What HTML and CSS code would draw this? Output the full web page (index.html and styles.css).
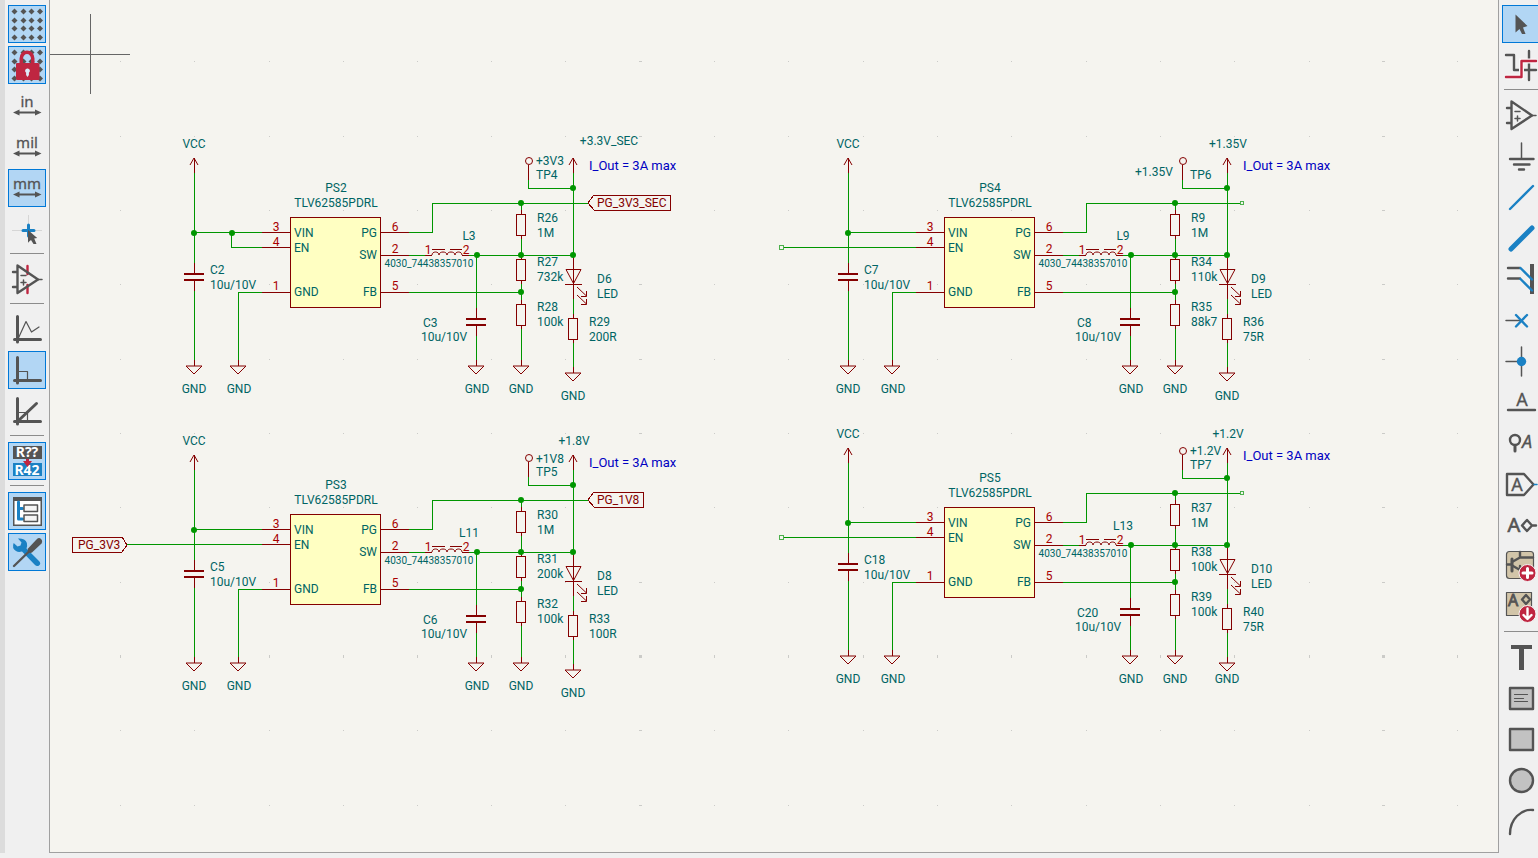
FILE: index.html
```html
<!doctype html>
<html lang="en">
<head>
    <meta charset="UTF-8">
    <title>Schematic Editor</title>
    <link rel="stylesheet" href="styles.css">
</head>
<body>
<div class="workspace">
    <nav class="toolbar toolbar-left" aria-label="Options">
        <button class="active" title="Show grid"><svg viewBox="0 0 38 38"><use href="#i-grid"/></svg></button>
        <button class="active" title="Grid overrides"><svg viewBox="0 0 38 38"><use href="#i-grid"/><path class="red" d="M8 18q0-1 1-1h2.500V12.500a7.500 8 0 0 1 15 0V17H30q1.500 0 1.500 1.500V32.500q0 1.500-1.500 1.500H9.500Q8 34 8 32.500zM15 17h8v-4a4 5 0 0 0-8 0z"/><path class="pale" d="M19.500 22.500a2.300 2.300 0 0 1 1.400 4.200V29l-1.400 2-1.400-2v-2.300a2.300 2.300 0 0 1 1.400-4.200z"/></svg></button>
        <button title="Inches"><svg viewBox="0 0 38 38"><text class="unit" x="19" y="20">in</text><use href="#i-arrows"/></svg></button>
        <button title="Mils"><svg viewBox="0 0 38 38"><text class="unit" x="19" y="20">mil</text><use href="#i-arrows"/></svg></button>
        <button class="active" title="Millimeters"><svg viewBox="0 0 38 38"><text class="unit" x="19" y="20">mm</text><use href="#i-arrows"/></svg></button>
        <button title="Full-window crosshairs"><svg viewBox="0 0 38 38"><path class="faint" d="M4 20.500h30M20.500 5v28"/><path class="line blue-line w3" d="M15 20.500h11M20.500 15v11"/><path class="dark" d="M20 20v12.500l3-2.500 2.500 4h3l-2.300-5.500 3-.5z"/></svg></button>
        <hr>
        <button title="Show hidden pins"><svg viewBox="0 0 38 38"><path class="line red-line w2" d="M19.500 6v8M19.500 25v8"/><use href="#i-amp"/></svg></button>
        <hr>
        <button title="Free angle"><svg viewBox="0 0 38 38"><use href="#i-axes"/><path class="line w1" d="M10 29l8-17.500 5.500 10.500 7.500-5"/></svg></button>
        <button class="active" title="90 degree"><svg viewBox="0 0 38 38"><path class="line w1" d="M10 20.500h9.500V29"/><use href="#i-axes"/></svg></button>
        <button title="45 degree"><svg viewBox="0 0 38 38"><path class="line w1" d="M10 20.500h9.500V29"/><path class="line w3" d="M10 29L28.500 11.500"/><use href="#i-axes"/></svg></button>
        <hr>
        <button class="active" title="Annotate automatically"><svg viewBox="0 0 38 38"><path class="dark" d="M5 4h29v13H5z"/><path class="blue" d="M5 21h29v13H5z"/><text class="anno" x="19" y="15">R??</text><text class="anno" x="19" y="33">R42</text><path class="red" d="M18 17h3v2h3l-4.500 6-4.500-6h3z"/></svg></button>
        <hr>
        <button class="active" title="Hierarchy navigator"><svg viewBox="0 0 38 38"><path class="white" d="M6 6h27v27H6z"/><path class="dark" d="M5 5h29v29H5zM6.500 9v23.500h26V9z" fill-rule="evenodd"/><path class="line blue-line w3" d="M10.500 10v17h4M10.500 16.500h4"/><path class="line white w1-5" d="M16 13h13.500v6.500H16zM16 23h13.500v6.500H16z"/></svg></button>
        <button class="active" title="Properties manager"><svg viewBox="0 0 38 38"><path class="blue" d="M10 5.500l3.500 4-1 3-3 1-3.800-3.500Q3.500 15 8 18q2.500 1.700 6 .5L26.500 31.500q2.500 2.500 4.500 1 2.500-2 0-4.500L18.500 15.500Q20.500 9 16 6.500 13 5 10 5.500z"/><path class="line w2" d="M6 33L22 17.500"/><path class="dark" d="M20 15.500L28.500 6.500q2.500-2.500 4.500-.5t.5 4.500L24 19.500q-2 1-3.500-.5t-.5-3.500z"/></svg></button>
    </nav>

    <main class="canvas">
        <svg class="sheet" role="img" aria-label="Step-down regulators">
            <defs>
                <path id="dots" d="M120 0h1M194 0h1M269 0h1M343 0h1M417 0h1M491 0h1M565 0h1M639 0h3M714 0h1M788 0h1M863 0h1M937 0h1M1011 0h1M1086 0h1M1160 0h1M1234 0h1M1309 0h1M1382 0h3M1457 0h1"/>
                <g id="gnd"><path class="part" d="M0 0v6"/><path class="part thin" d="M-8 6H8L0 14z"/></g>
                <g id="power"><path class="part" d="M0 0v15"/><path class="part thin" d="M-4 7L0 0l4 7"/></g>
                <path id="res" class="part" d="M0-4v4M-5 0h9v21h-9zM0 21v4"/>
                <g id="cap"><path class="part" d="M0-10V0M0 8v10"/><path class="plate" d="M-10 1h20M-10 7h20"/></g>
                <circle id="dot" r="3"/>
                <g id="regulator">
                    <g class="wire">
                        <path d="M194 173v90M194 291v69M194 232h68M262 292h-24v68"/>
                        <path d="M409 232h23v-29h89M409 255h16M469 255h104M409 292h112"/>
                        <path d="M476 255v53M476 336v24M521 203v7M521 239v16M521 284v16M521 329v31"/>
                        <path d="M528 180v8h45M573 173v85M573 299v15M573 343v24"/>
                    </g>
                    <use href="#power" x="194" y="158"/>
                    <use href="#power" x="573" y="158"/>
                    <use href="#cap" x="194" y="273"/>
                    <use href="#cap" x="476" y="318"/>
                    <use href="#gnd" x="194" y="360"/>
                    <use href="#gnd" x="238" y="360"/>
                    <use href="#gnd" x="476" y="360"/>
                    <use href="#gnd" x="521" y="360"/>
                    <use href="#gnd" x="573" y="367"/>
                    <use href="#res" x="521" y="214"/>
                    <use href="#res" x="521" y="259"/>
                    <use href="#res" x="521" y="304"/>
                    <use href="#res" x="573" y="318"/>
                    <path class="part" d="M262 232h28M262 247h28M262 292h28M381 232h28M381 255h28M381 292h28"/>
                    <path class="part chip" d="M290 217h90v90h-90z"/>
                    <path class="part" d="M425 255h7M462 255h7M432 249h13M450 249h12"/>
                    <path class="part thin" d="M432 255c0-4 7-4 7 0 0-4 8-4 8 0 0-4 8-4 8 0 0-4 7-4 7 0"/>
                    <path class="part" d="M528 165v15M573 258v41M565 284h17"/>
                    <circle class="part thin" cx="529" cy="161" r="3.500"/>
                    <path class="part thin" d="M566 269.500h15l-7.500 14zM577 287l9.500 9M586.500 291v5.500H581M577 295l9.500 9M586.500 299v5.500H581"/>
                    <g class="joint">
                        <use href="#dot" x="194" y="233"/>
                        <use href="#dot" x="477" y="255"/>
                        <use href="#dot" x="521" y="203"/>
                        <use href="#dot" x="521" y="255"/>
                        <use href="#dot" x="521" y="292"/>
                        <use href="#dot" x="573" y="188"/>
                        <use href="#dot" x="573" y="255"/>
                    </g>
                </g>
            </defs>

            <!-- page coordinates start at the left toolbar -->
            <g transform="translate(-50 0)">
                <g class="grid">
                    <use href="#dots" y="61"/><use href="#dots" y="136"/><use href="#dots" y="210"/>
                    <use href="#dots" y="284"/><use href="#dots" y="359"/><use href="#dots" y="433"/>
                    <use href="#dots" y="507"/><use href="#dots" y="582"/><use class="major" href="#dots" y="656"/>
                    <use href="#dots" y="730"/><use href="#dots" y="805"/>
                </g>
                <path class="cursor" d="M50 54h80M90 14v80"/>

                <!-- 3.3V -->
                <g>
                    <use href="#regulator"/>
                    <path class="wire" d="M231 232v15h31M521 203h67"/>
                    <use class="joint" href="#dot" x="232" y="233"/>
                    <path class="part" d="M588 203l6-8h76v15h-76z"/>
                    <g class="mid">
                        <text x="194" y="148">VCC</text><text x="194" y="393">GND</text><text x="239" y="393">GND</text>
                        <text x="477" y="393">GND</text><text x="521" y="393">GND</text><text x="573" y="400">GND</text>
                        <text x="336" y="192">PS2</text><text x="336" y="207">TLV62585PDRL</text>
                        <text x="469" y="240">L3</text><text class="small" x="429" y="267">4030_74438357010</text>
                        <text x="609" y="145">+3.3V_SEC</text>
                    </g>
                    <g class="mid num">
                        <text x="276" y="231">3</text><text x="276" y="246">4</text><text x="276" y="290">1</text>
                        <text x="395" y="231">6</text><text x="395" y="253">2</text><text x="395" y="290">5</text>
                        <text x="428" y="254">1</text><text x="466" y="254">2</text>
                    </g>
                    <text x="294" y="237">VIN</text><text x="294" y="252">EN</text><text x="294" y="296">GND</text>
                    <g class="end"><text x="377" y="237">PG</text><text x="377" y="259">SW</text><text x="377" y="296">FB</text></g>
                    <text x="210" y="274">C2</text><text x="210" y="289">10u/10V</text>
                    <text x="423" y="327">C3</text><text x="421" y="341">10u/10V</text>
                    <text x="537" y="222">R26</text><text x="537" y="237">1M</text>
                    <text x="537" y="266">R27</text><text x="537" y="281">732k</text>
                    <text x="537" y="311">R28</text><text x="537" y="326">100k</text>
                    <text x="597" y="283">D6</text><text x="597" y="298">LED</text>
                    <text x="589" y="326">R29</text><text x="589" y="341">200R</text>
                    <text x="536" y="165">+3V3</text><text x="536" y="179">TP4</text>
                    <text class="label" x="597" y="207">PG_3V3_SEC</text>
                    <text class="note" x="589" y="170">I_Out = 3A max</text>
                </g>

                <!-- 1.35V -->
                <g transform="translate(654 0)">
                    <use href="#regulator"/>
                    <path class="wire" d="M129 247h133M521 203h65"/>
                    <path class="open" d="M125 245h4v4h-4zM586 201h3v3h-3z"/>
                    <g class="mid">
                        <text x="194" y="148">VCC</text><text x="194" y="393">GND</text><text x="239" y="393">GND</text>
                        <text x="477" y="393">GND</text><text x="521" y="393">GND</text><text x="573" y="400">GND</text>
                        <text x="336" y="192">PS4</text><text x="336" y="207">TLV62585PDRL</text>
                        <text x="469" y="240">L9</text><text class="small" x="429" y="267">4030_74438357010</text>
                        <text x="574" y="148">+1.35V</text>
                    </g>
                    <g class="mid num">
                        <text x="276" y="231">3</text><text x="276" y="246">4</text><text x="276" y="290">1</text>
                        <text x="395" y="231">6</text><text x="395" y="253">2</text><text x="395" y="290">5</text>
                        <text x="428" y="254">1</text><text x="466" y="254">2</text>
                    </g>
                    <text x="294" y="237">VIN</text><text x="294" y="252">EN</text><text x="294" y="296">GND</text>
                    <g class="end"><text x="377" y="237">PG</text><text x="377" y="259">SW</text><text x="377" y="296">FB</text></g>
                    <text x="210" y="274">C7</text><text x="210" y="289">10u/10V</text>
                    <text x="423" y="327">C8</text><text x="421" y="341">10u/10V</text>
                    <text x="537" y="222">R9</text><text x="537" y="237">1M</text>
                    <text x="537" y="266">R34</text><text x="537" y="281">110k</text>
                    <text x="537" y="311">R35</text><text x="537" y="326">88k7</text>
                    <text x="597" y="283">D9</text><text x="597" y="298">LED</text>
                    <text x="589" y="326">R36</text><text x="589" y="341">75R</text>
                    <text x="481" y="176">+1.35V</text><text x="536" y="179">TP6</text>
                    <text class="note" x="589" y="170">I_Out = 3A max</text>
                </g>

                <!-- 1.8V -->
                <g transform="translate(0 297)">
                    <use href="#regulator"/>
                    <path class="wire" d="M127 247h135M521 203h67"/>
                    <path class="part" d="M588 203l6-8h49v15h-49zM72 240h50l5 8-5 7H72z"/>
                    <g class="mid">
                        <text x="194" y="148">VCC</text><text x="194" y="393">GND</text><text x="239" y="393">GND</text>
                        <text x="477" y="393">GND</text><text x="521" y="393">GND</text><text x="573" y="400">GND</text>
                        <text x="336" y="192">PS3</text><text x="336" y="207">TLV62585PDRL</text>
                        <text x="469" y="240">L11</text><text class="small" x="429" y="267">4030_74438357010</text>
                        <text x="574" y="148">+1.8V</text>
                    </g>
                    <g class="mid num">
                        <text x="276" y="231">3</text><text x="276" y="246">4</text><text x="276" y="290">1</text>
                        <text x="395" y="231">6</text><text x="395" y="253">2</text><text x="395" y="290">5</text>
                        <text x="428" y="254">1</text><text x="466" y="254">2</text>
                    </g>
                    <text x="294" y="237">VIN</text><text x="294" y="252">EN</text><text x="294" y="296">GND</text>
                    <g class="end"><text x="377" y="237">PG</text><text x="377" y="259">SW</text><text x="377" y="296">FB</text></g>
                    <text x="210" y="274">C5</text><text x="210" y="289">10u/10V</text>
                    <text x="423" y="327">C6</text><text x="421" y="341">10u/10V</text>
                    <text x="537" y="222">R30</text><text x="537" y="237">1M</text>
                    <text x="537" y="266">R31</text><text x="537" y="281">200k</text>
                    <text x="537" y="311">R32</text><text x="537" y="326">100k</text>
                    <text x="597" y="283">D8</text><text x="597" y="298">LED</text>
                    <text x="589" y="326">R33</text><text x="589" y="341">100R</text>
                    <text x="536" y="166">+1V8</text><text x="536" y="179">TP5</text>
                    <text class="label" x="597" y="207">PG_1V8</text>
                    <text class="label" x="78" y="252">PG_3V3</text>
                    <text class="note" x="589" y="170">I_Out = 3A max</text>
                </g>

                <!-- 1.2V -->
                <g transform="translate(654 290)">
                    <use href="#regulator"/>
                    <path class="wire" d="M129 247h133M521 203h65"/>
                    <path class="open" d="M125 245h4v4h-4zM586 201h3v3h-3z"/>
                    <g class="mid">
                        <text x="194" y="148">VCC</text><text x="194" y="393">GND</text><text x="239" y="393">GND</text>
                        <text x="477" y="393">GND</text><text x="521" y="393">GND</text><text x="573" y="393">GND</text>
                        <text x="336" y="192">PS5</text><text x="336" y="207">TLV62585PDRL</text>
                        <text x="469" y="240">L13</text><text class="small" x="429" y="267">4030_74438357010</text>
                        <text x="574" y="148">+1.2V</text>
                    </g>
                    <g class="mid num">
                        <text x="276" y="231">3</text><text x="276" y="246">4</text><text x="276" y="290">1</text>
                        <text x="395" y="231">6</text><text x="395" y="253">2</text><text x="395" y="290">5</text>
                        <text x="428" y="254">1</text><text x="466" y="254">2</text>
                    </g>
                    <text x="294" y="237">VIN</text><text x="294" y="252">EN</text><text x="294" y="296">GND</text>
                    <g class="end"><text x="377" y="237">PG</text><text x="377" y="259">SW</text><text x="377" y="296">FB</text></g>
                    <text x="210" y="274">C18</text><text x="210" y="289">10u/10V</text>
                    <text x="423" y="327">C20</text><text x="421" y="341">10u/10V</text>
                    <text x="537" y="222">R37</text><text x="537" y="237">1M</text>
                    <text x="537" y="266">R38</text><text x="537" y="281">100k</text>
                    <text x="537" y="311">R39</text><text x="537" y="326">100k</text>
                    <text x="597" y="283">D10</text><text x="597" y="298">LED</text>
                    <text x="589" y="326">R40</text><text x="589" y="341">75R</text>
                    <text x="536" y="165">+1.2V</text><text x="536" y="179">TP7</text>
                    <text class="note" x="589" y="170">I_Out = 3A max</text>
                </g>
            </g>
        </svg>
    </main>

    <nav class="toolbar toolbar-right" aria-label="Tools">
        <button class="active" title="Select"><svg viewBox="0 0 38 38"><path class="dark" d="M13.500 9.500V27.500l4-3.500 2.500 5h3.500l-2.500-6.500 4.500-1.500z"/></svg></button>
        <button title="Highlight nets"><svg viewBox="0 0 38 38"><path class="line w2" d="M4 9h8v15h5M22 24h12M27 5v29"/><path class="halo" d="M4 31h15.500V15H34"/><path class="line red-line w2" d="M4 31h15.500V15H34"/></svg></button>
        <hr>
        <button title="Place symbols"><svg viewBox="0 0 38 38"><use href="#i-amp"/></svg></button>
        <button title="Place power"><svg viewBox="0 0 38 38"><path class="line w1-5" d="M19.500 6v15"/><path class="line w2" d="M8 22h23.500M12 27.500h15.500M17 32.500h5"/></svg></button>
        <button title="Draw wires"><svg viewBox="0 0 38 38"><path class="line blue-line w2" d="M8 31L31 8"/></svg></button>
        <button title="Draw buses"><svg viewBox="0 0 38 38"><path class="line blue-line w5" d="M9 30L30 9"/></svg></button>
        <button title="Bus entries"><svg viewBox="0 0 38 38"><path class="dark" d="M28 4h4v30h-4z"/><path class="line w2" d="M6 8h12M6 18.500h12"/><path class="line blue-line w2" d="M18.500 8l11.500 11.500M18.500 19l11.500 11.500"/></svg></button>
        <button title="No-connect flags"><svg viewBox="0 0 38 38"><path class="line w1-5" d="M4 19.500h14"/><path class="line blue-line w2" d="M14 14l11 11.500M25 14L14 25.500"/></svg></button>
        <button title="Junctions"><svg viewBox="0 0 38 38"><path class="line w1-5" d="M4 19.500h14M19.500 5v29"/><circle class="blue" cx="19.500" cy="19.500" r="4.700"/></svg></button>
        <button title="Net labels"><svg viewBox="0 0 38 38"><text class="letter" x="20" y="23">A</text><path class="line w2" d="M6 27h27"/></svg></button>
        <button title="Directive labels"><svg viewBox="0 0 38 38"><circle class="line w2" cx="13" cy="16" r="5"/><path class="line w3" d="M13 22v5"/><text class="letter slanted" x="25" y="24">A</text></svg></button>
        <button title="Global labels"><svg viewBox="0 0 38 38"><path class="line w2" d="M5 9h17l9.500 10.500L22 30H5z"/><text class="letter" x="15" y="26">A</text><path class="line blue-line w1-5" d="M32 19.500h3"/></svg></button>
        <button title="Hierarchical labels"><svg viewBox="0 0 38 38"><text class="letter heavy" x="12" y="26">A</text><path class="line w2" d="M25 14l5 5.500-5 5.500-5-5.500zM31 19.500h3"/></svg></button>
        <button title="Draw sheets"><svg viewBox="0 0 38 38"><rect class="line tan w1" x="4.500" y="4.500" width="27" height="27" rx="3"/><path class="line w2" d="M5 17.500h5M18 5v5.500L10 15M18 10.500h13M11 19l7 4v-4"/><path class="line w3" d="M10 12v12"/><circle class="red rim" cx="25.500" cy="26" r="8.500"/><path class="line white-line w3" d="M25.500 21.500v9M21 26h9"/></svg></button>
        <button title="Sync sheet pins"><svg viewBox="0 0 38 38"><path class="line tan w1" d="M4.500 4.500h25v23h-25z"/><text class="letter short" x="11" y="18">A</text><path class="line w2" d="M24 7l4 4.500-4 4.500-4-4.500z"/><circle class="red rim" cx="25.500" cy="26" r="8.500"/><path class="line white-line w2" d="M25.500 20.500v10M21.500 27l4 4 4-4"/></svg></button>
        <hr>
        <button title="Text"><svg viewBox="0 0 38 38"><path class="dark" d="M9 7h21v4h-8v21h-5V11H9z"/></svg></button>
        <button title="Text boxes"><svg viewBox="0 0 38 38"><path class="line silver w2" d="M8 9h23v21H8z"/><path class="line w1" d="M12.500 15.500h13M12.500 19.500h9M12.500 22.500h13"/></svg></button>
        <button title="Rectangles"><svg viewBox="0 0 38 38"><path class="line silver w2" d="M8 9h23v21H8z"/></svg></button>
        <button title="Circles"><svg viewBox="0 0 38 38"><circle class="line silver w2" cx="19.500" cy="19.500" r="11.500"/></svg></button>
        <button title="Arcs"><svg viewBox="0 0 38 38"><path class="line w2" d="M8 32Q8 21 15 14T31 8"/></svg></button>
    </nav>
</div>
<footer class="statusbar"></footer>

<!-- shared icon parts -->
<svg class="icon-defs" aria-hidden="true">
    <defs>
        <path id="dot4" d="M-3 0L-1-2 0-3 1-2 3 0 1 2 0 3-1 2z"/>
        <g id="dotrow" class="dark"><use href="#dot4" x="6.500"/><use href="#dot4" x="15.500"/><use href="#dot4" x="23.500"/><use href="#dot4" x="32"/></g>
        <g id="i-grid"><use href="#dotrow" y="6.500"/><use href="#dotrow" y="15.500"/><use href="#dotrow" y="23.500"/><use href="#dotrow" y="32.500"/></g>
        <path id="i-arrows" class="dark" d="M5 25.500l6.500-3v2h15.500v-2l6.500 3-6.500 3v-2H11.500v2z"/>
        <path id="i-axes" class="line w3" d="M9.500 6.500V32M6.500 29.500h26"/>
        <g id="i-amp"><path class="line w2" d="M9.500 5.500L30 19.500 9.500 33zM5 12h4M5 27h4"/><path class="line w1-5" d="M13 15.500h5M13 22.500h5M15.500 20v5M30 19.500h4"/></g>
    </defs>
</svg>
</body>
</html>
```
FILE: styles.css
```css
*{box-sizing:border-box}
body{margin:0;height:100vh;display:flex;flex-direction:column;background:#f0f0f0;font-family:Roboto,"Liberation Sans",sans-serif;overflow:hidden}
.workspace{flex:1;display:flex;min-height:0}

/* toolbars */
.toolbar{display:flex;flex-direction:column;gap:3px;padding:5px 3px 0;background:#f0f0f0;overflow:hidden;flex:none}
.toolbar-left{width:49px;border-left:5px solid #dcdcdc}
.toolbar-right{width:39px}
.toolbar button{flex:none;width:38px;height:38px;padding:0;border:0;background:none}
.toolbar button.active{background:#b2d6f4;box-shadow:inset 0 0 0 1px #0078d7}
.toolbar svg{display:block;width:38px;height:38px}
.toolbar hr{flex:none;width:34px;height:1px;margin:2px 2px 3px;border:0;background:#8c8c8c}
.icon-defs{position:absolute;width:0;height:0}

/* icons */
.dark{fill:#545454}
.blue{fill:#1a81c4}
.red{fill:#bf2641}
.white{fill:#fff}
.pale{fill:#dcebf8}
.line{fill:none;stroke:#545454;stroke-linecap:round;stroke-linejoin:round}
.line.white{fill:#f5f5f5}
.line.tan{fill:#d2c5a9}
.line.silver{fill:#c2c2c2}
.blue-line{stroke:#1a81c4}
.red-line{stroke:#bf2641}
.white-line{stroke:#fff}
.rim{stroke:#f5f5f5;stroke-width:1}
.halo{fill:none;stroke:#f8f8f8;stroke-width:5}
.faint{fill:none;stroke:#d6d6d6}
.w1{stroke-width:1.2}
.w1-5{stroke-width:1.5}
.w2{stroke-width:2.4}
.w3{stroke-width:3}
.w5{stroke-width:5}
.unit,.anno,.letter{font-family:"Noto Sans",sans-serif;text-anchor:middle;fill:#545454}
.unit{font-size:15px;stroke:#545454;stroke-width:.3}
.anno{font-size:14px;font-weight:700;fill:#fff}
.letter{font-size:18px;stroke:#545454;stroke-width:.3}
.slanted{font-style:italic}
.heavy{font-size:20px;stroke-width:.6}
.short{font-size:16px;stroke-width:.8}

/* drawing area */
.canvas{flex:1;min-width:0;background:#f5f4ef;border:1px solid #a0a0a0;border-top:0}
.sheet{display:block;width:100%;height:100%}
.sheet text{font-size:12px;fill:#006464}
.grid{stroke:#cbcbc8;shape-rendering:crispEdges}
.grid .major{stroke-width:3}
.cursor{stroke:#666;shape-rendering:crispEdges}
.wire,.part{fill:none;shape-rendering:crispEdges}
.wire{stroke:#009600}
.part{stroke:#840000}
.thin{shape-rendering:auto}
.chip{fill:#ffffc2}
.plate{stroke:#840000;stroke-width:2;shape-rendering:crispEdges}
.joint{fill:#009600}
.open{fill:none;stroke:#4cb04c;shape-rendering:crispEdges}
.mid{text-anchor:middle}
.end{text-anchor:end}
.sheet .num text{fill:#a90000}
.sheet .small{font-size:10px}
.sheet .label{fill:#840000}
.sheet .note{font-size:13px;fill:#0000c2}

.statusbar{flex:none;height:5px;background:#f0f0f0}
```
